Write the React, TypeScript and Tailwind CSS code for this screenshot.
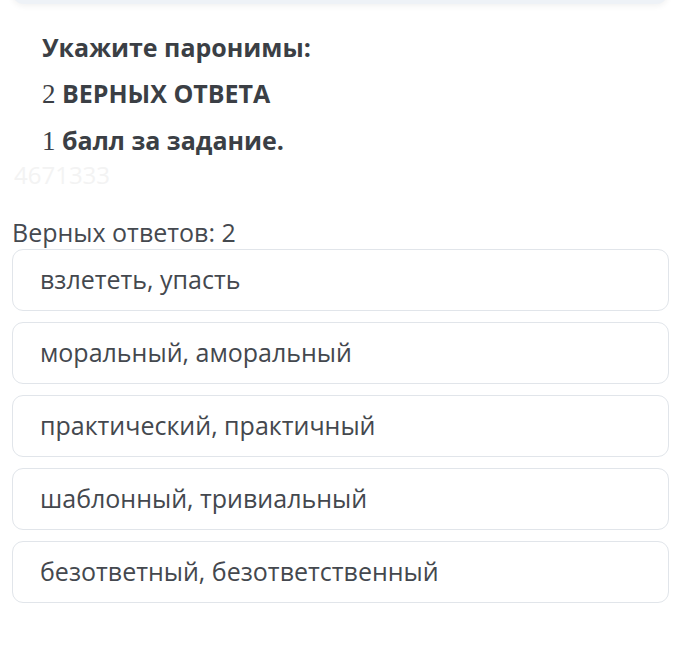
const options = [
  'взлететь, упасть',
  'моральный, аморальный',
  'практический, практичный',
  'шаблонный, тривиальный',
  'безответный, безответственный',
];

export default function App() {
  return (
    <div
      className="w-[700px] h-[648px] bg-white overflow-hidden relative text-[#3b3f45]"
      style={{ fontFamily: '"Open Sans", "Noto Sans", sans-serif' }}
    >
      {/* previous card edge */}
      <div className="absolute left-[12px] right-[32px] top-[-40px] h-[44px] rounded-[12px] bg-[#eef2f7] shadow-[0_2px_6px_rgba(0,0,0,0.06)]" />

      <div className="pt-[28px] pl-[42px] flex flex-col">
        <div className="text-[25px] font-bold leading-[38px]">Укажите паронимы:</div>
        <div className="text-[25px] font-bold leading-[38px] mt-[8px]">
          <span className="font-normal text-[27px]" style={{ fontFamily: '"Liberation Serif", serif' }}>2</span> ВЕРНЫХ ОТВЕТА
        </div>
        <div className="text-[25px] font-bold leading-[38px] mt-[8px]">
          <span className="font-normal text-[27px]" style={{ fontFamily: '"Liberation Serif", serif' }}>1</span> балл за задание.
        </div>
      </div>

      <div className="pl-[14px] text-[24px] leading-[24px] text-[#f3f3f3] mt-[3px]">4671333</div>

      <div className="pl-[12px] pr-[31px] mt-[30px]">
        <div className="text-[25px] leading-[30px] text-[#45494f]">Верных ответов: 2</div>
        <div className="flex flex-col gap-[11px] mt-[2px]">
          {options.map((o) => (
            <div
              key={o}
              className="h-[62px] rounded-[11px] border border-[#e1e5ea] bg-white flex items-center pl-[27px] text-[25px] text-[#44484e]"
            >
              {o}
            </div>
          ))}
        </div>
      </div>
    </div>
  );
}
